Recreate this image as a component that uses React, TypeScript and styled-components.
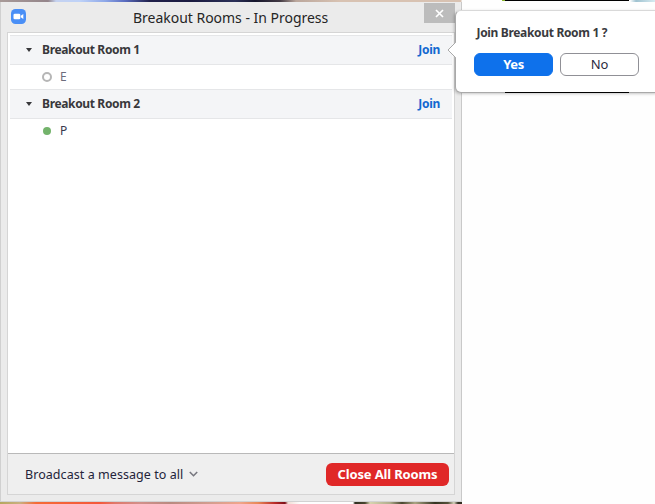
import React from 'react';
import styled, { createGlobalStyle } from 'styled-components';

const Global = createGlobalStyle`
  * { box-sizing: border-box; }
  html, body { margin: 0; padding: 0; background: #fefefe; overflow: hidden; }
  body { font-family: 'Noto Sans', 'Open Sans', sans-serif; font-size: 12px; color: #39394d; }
  button { font-family: inherit; padding: 0; border: 0; background: none; }
`;

const Desktop = styled.div`
  position: relative;
  display: flex;
  flex-direction: column;
  width: 655px;
  height: 504px;
  overflow: hidden;
`;

const TopStrip = styled.div`
  flex: 0 0 2px;
  background:
    linear-gradient(#000, #000) 505px 0 / 124px 1px no-repeat,
    linear-gradient(#8ab52c, #8ab52c) 502px 0 / 3px 1px no-repeat,
    linear-gradient(90deg, #a89a98 0, #94858a 48px, #c5d2f0 56px, #bed2f8 80px, #8ea8e8 105px, #5a6cc0 125px, #20204a 150px,
      #1b1b40 190px, #2b3058 235px, #16162c 255px, #433a44 280px, #bba79c 296px, #d8c2b2 340px, #d8c2b2 461px, #fefefe 462px,
      #fefefe 630px, #9fc2d0 636px, #d7ebf1 655px);
`;

const BottomStrip = styled.div`
  flex: 0 0 2px;
  width: 462px;
  background: linear-gradient(90deg, #b5a75e 0, #c9b080 20px, #f56b37 36px, #f4583a 100px, #e0786a 115px, #d2908a 140px,
    #b98a80 170px, #d39d8f 210px, #f0a58b 240px, #e88858 258px, #b92b28 275px, #7c0f18 285px, #f1dcd4 288px, #fefefe 300px,
    #fefefe 353px, #302e20 355px, #49462f 365px, #d7d4b0 370px, #b0ad8c 390px, #49462f 402px, #aaa583 415px, #343321 435px,
    #55523a 448px, #d7d4bd 454px, #332f22 458px);
`;

const Window = styled.main`
  display: flex;
  flex-direction: column;
  width: 462px;
  height: 500px;
  padding: 0 6px 6px 7px;
  background: #ebebeb;
  border-right: 1px solid #c9c9c9;
  border-bottom: 1px solid #d2d2d2;
  box-shadow: inset 1px 0 #d0d0d0;
`;

const TitleBar = styled.header`
  flex: 0 0 30px;
  display: flex;
  align-items: flex-start;
  padding: 0 0 0 3px;
`;

const AppIcon = styled.svg`
  width: 15px;
  height: 15px;
  margin: 7px 0 0 1px;
`;

const Title = styled.h1`
  flex: 1;
  margin: 4px 0 0 107px;
  font: 400 14px/23px 'Noto Sans', 'Open Sans', sans-serif;
  letter-spacing: -0.02px;
  color: #252525;
  white-space: nowrap;
`;

const CloseButton = styled.button`
  display: grid;
  place-items: center;
  width: 31px;
  height: 20px;
  margin-top: 1px;
  background: #bcbcbc;
`;

const Panel = styled.section`
  flex: 1;
  display: flex;
  flex-direction: column;
  border: 1px solid #d5d5d5;
  background: #fff;
`;

const Rooms = styled.div`
  flex: 1;
  padding: 2px;
`;

const RoomHeader = styled.div`
  display: flex;
  align-items: center;
  height: 30px;
  padding: 0 12px 0 16px;
  background: #f4f5f7;
  border: solid #e5e6e8;
  border-width: 1px 0;
`;

const RoomName = styled.h2`
  flex: 1;
  margin: -1px 0 0 10px;
  font-size: 12px;
  line-height: 18px;
  font-weight: 700;
  letter-spacing: -0.35px;
  color: #38383b;
`;

const JoinLink = styled.button`
  margin-top: -1px;
  font-size: 12px;
  line-height: 18px;
  font-weight: 700;
  letter-spacing: -0.3px;
  color: #1268d0;
`;

const Person = styled.div<{ $muted?: boolean }>`
  display: flex;
  align-items: center;
  height: 24px;
  padding-left: 32px;
  gap: 8px;
  font-size: 12px;
  line-height: 18px;
  color: ${(p) => (p.$muted ? '#6c6c7c' : '#39394d')};
`;

const PersonName = styled.span`
  margin-top: -1px;
`;

const Status = styled.span<{ $online?: boolean }>`
  width: ${(p) => (p.$online ? '8px' : '10px')};
  height: ${(p) => (p.$online ? '8px' : '10px')};
  margin: ${(p) => (p.$online ? '0 1px' : '0')};
  border-radius: 50%;
  background: ${(p) => (p.$online ? '#73b36b' : '#fff')};
  border: ${(p) => (p.$online ? '0' : '2px solid #b6b6b6')};
`;

const Footer = styled.footer`
  flex: 0 0 41px;
  display: flex;
  align-items: center;
  justify-content: space-between;
  padding: 0 5px 0 17px;
  background: #efefef;
  border-top: 1px solid #b9b9b9;
`;

const Broadcast = styled.button`
  display: flex;
  align-items: center;
  gap: 6px;
  font-size: 12.5px;
  letter-spacing: 0.06px;
  color: #24243a;
  white-space: nowrap;
`;

const CloseRooms = styled.button`
  width: 123px;
  height: 23px;
  border-radius: 6px;
  background: #e02828;
  color: #fff;
  font-size: 13px;
  font-weight: 700;
  letter-spacing: -0.14px;
`;

const Popover = styled.aside`
  position: absolute;
  left: 455px;
  top: 10px;
  width: 206px;
  height: 83px;
  padding: 13px 0 0 18px;
  background: #fff;
  border: 1px solid #a9a9a9;
  border-top-color: #d9d9d9;
  border-radius: 6px;
  box-shadow: -1px 1px 3px rgba(0, 0, 0, 0.22);
`;

const PopoverArrow = styled.svg`
  position: absolute;
  left: -9px;
  top: 28px;
  width: 10px;
  height: 22px;
`;

const BottomEdge = styled.span`
  position: absolute;
  left: 49px;
  bottom: -1px;
  width: 124px;
  height: 1px;
  background: #000;
`;

const Question = styled.p`
  margin: 0 0 11px 2.5px;
  font-size: 12px;
  line-height: 18px;
  font-weight: 700;
  letter-spacing: -0.33px;
  color: #3a3a3e;
  white-space: nowrap;
`;

const Choices = styled.div`
  display: flex;
  gap: 7px;
`;

const Choice = styled.button<{ $primary?: boolean }>`
  width: 79px;
  height: 23px;
  padding-bottom: 1px;
  border-radius: 6px;
  font-size: 13px;
  line-height: 20px;
  font-weight: ${(p) => (p.$primary ? 700 : 400)};
  letter-spacing: ${(p) => (p.$primary ? '-0.4px' : '0')};
  color: ${(p) => (p.$primary ? '#fff' : '#2b2b40')};
  background: ${(p) => (p.$primary ? '#0e71eb' : '#fff')};
  border: 1px solid ${(p) => (p.$primary ? '#0e71eb' : '#909096')};
`;

const rooms = [
  { name: 'Breakout Room 1', person: 'E', online: false },
  { name: 'Breakout Room 2', person: 'P', online: true },
];

export default function App() {
  return (
    <Desktop>
      <Global />
      <TopStrip />
      <Window>
        <TitleBar>
          <AppIcon viewBox="0 0 15 15">
            <rect width="15" height="15" rx="4.5" fill="#4a8ff6" />
            <rect x="2.5" y="4.7" width="6.8" height="5.6" rx="1.3" fill="#fff" />
            <path d="M9.8 6.8 12.3 5v5L9.8 8.3z" fill="#fff" />
          </AppIcon>
          <Title>Breakout Rooms - In Progress</Title>
          <CloseButton aria-label="Close">
            <svg width="9" height="9" viewBox="0 0 9 9">
              <path d="m1 1 7 7M8 1 1 8" stroke="#fff" strokeWidth="1.7" />
            </svg>
          </CloseButton>
        </TitleBar>
        <Panel>
          <Rooms>
            {rooms.map((r) => (
              <React.Fragment key={r.name}>
                <RoomHeader>
                  <svg width="6" height="4" viewBox="0 0 6 4">
                    <path d="M0 0h6L3 4z" fill="#38383b" />
                  </svg>
                  <RoomName>{r.name}</RoomName>
                  <JoinLink>Join</JoinLink>
                </RoomHeader>
                <Person $muted={!r.online}>
                  <Status $online={r.online} />
                  <PersonName>{r.person}</PersonName>
                </Person>
              </React.Fragment>
            ))}
          </Rooms>
          <Footer>
            <Broadcast>
              Broadcast a message to all
              <svg width="9" height="6" viewBox="0 0 9 6">
                <path d="m.8 1 3.7 3.7L8.2 1" fill="none" stroke="#77777f" strokeWidth="1.6" />
              </svg>
            </Broadcast>
            <CloseRooms>Close All Rooms</CloseRooms>
          </Footer>
        </Panel>
      </Window>
      <BottomStrip />
      <Popover>
        <PopoverArrow viewBox="0 0 10 22">
          <path d="M10 1 8.6 3.4 1 11l7.6 7.6L10 21z" fill="#fff" />
          <path d="M8.5 1v2.5L1 11l7.5 7.5V21" fill="none" stroke="#a9a9a9" />
        </PopoverArrow>
        <BottomEdge />
        <Question>Join Breakout Room 1 ?</Question>
        <Choices>
          <Choice $primary>Yes</Choice>
          <Choice>No</Choice>
        </Choices>
      </Popover>
    </Desktop>
  );
}
